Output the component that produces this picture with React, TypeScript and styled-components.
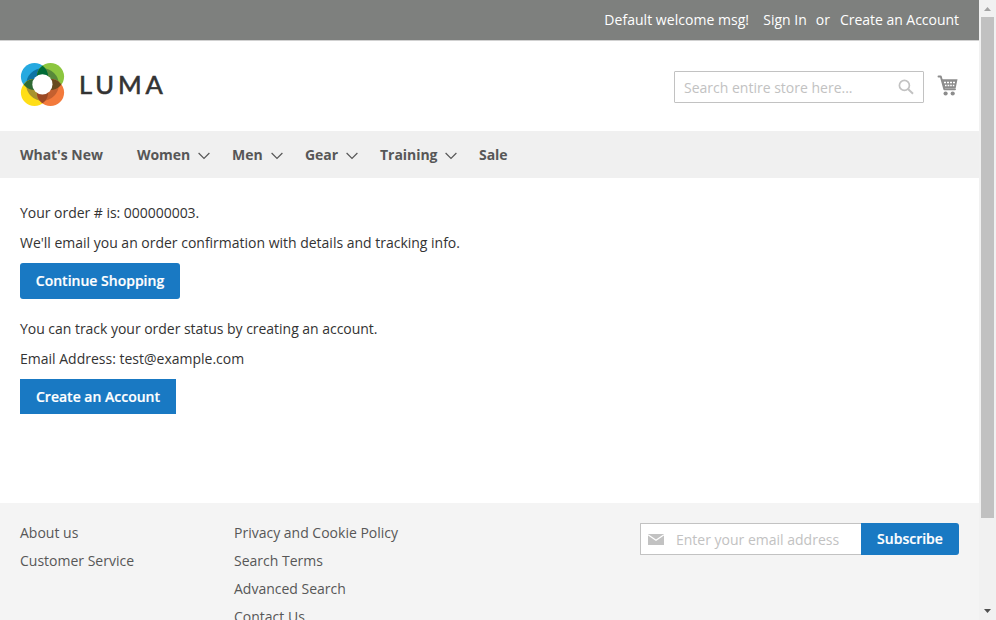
import React from "react";
import styled, { createGlobalStyle } from "styled-components";

const Global = createGlobalStyle`
  * { box-sizing: border-box; }
  html, body { margin: 0; padding: 0; height: 620px; overflow: hidden; background: #fff; }
  body { font-family: "Open Sans", Arial, sans-serif; font-size: 14px; line-height: 20px; color: #333; }
`;

const Window = styled.div`
  display: flex;
  width: 996px;
  height: 620px;
  overflow: hidden;
`;
const Page = styled.div`
  display: flex;
  flex-direction: column;
  width: 979px;
  height: 620px;
  overflow: hidden;
`;
const TopBar = styled.div`
  flex: none;
  display: flex;
  justify-content: flex-end;
  height: 41px;
  padding: 10px 20px 0 0;
  background: #7e807e;
  border-bottom: 1px solid #d1d1d1;
  color: #fff;
`;
const TopText = styled.span<{ $gap?: number; $spacing?: number }>`
  margin-left: ${(p) => p.$gap ?? 0}px;
  letter-spacing: ${(p) => p.$spacing ?? 0}px;
  white-space: nowrap;
`;
const Header = styled.header`
  flex: none;
  display: flex;
  align-items: flex-start;
  height: 90px;
  padding: 21px 20px 0;
`;
const Brand = styled.div`
  display: flex;
  align-items: flex-start;
  margin-right: auto;
`;
const BrandName = styled.span`
  margin: 0 0 0 13px;
  font-family: Lato, sans-serif;
  font-size: 25.5px;
  line-height: 44px;
  letter-spacing: 3.9px;
  color: #333;
  -webkit-text-stroke: 0.6px #333;
`;
const SearchBox = styled.div`
  display: flex;
  align-items: center;
  justify-content: space-between;
  width: 250px;
  height: 32px;
  margin: 9px 15px 0 0;
  padding: 2px 9px 0 9px;
  border: 1px solid #c2c2c2;
  border-radius: 1px;
  color: #c2c2c2;
`;
const SearchIcon = styled.svg`
  margin-top: -2px;
`;
const CartIcon = styled.svg`
  margin: 13px 1px 0 -2px;
`;
const Nav = styled.nav`
  flex: none;
  display: flex;
  align-items: center;
  height: 47px;
  padding: 0 20px;
  background: #f0f0f0;
  color: #575757;
  font-weight: 700;
`;
const NavItem = styled.span<{ $width: number }>`
  display: flex;
  align-items: center;
  justify-content: space-between;
  width: ${(p) => p.$width}px;
  margin-right: 22px;
  letter-spacing: -0.04px;
  white-space: nowrap;
`;
const Chevron = styled.svg`
  margin-top: 2px;
`;
const Main = styled.main`
  flex: none;
  display: flex;
  flex-direction: column;
  align-items: flex-start;
  height: 325px;
  padding: 25px 20px 0;
`;
const Line = styled.p<{ $spacing?: number }>`
  margin: 0 0 10px;
  letter-spacing: ${(p) => p.$spacing ?? 0}px;
  white-space: nowrap;
`;
const Button = styled.button<{ $w: number; $h: number; $radius: string; $after?: number }>`
  width: ${(p) => p.$w}px;
  height: ${(p) => p.$h}px;
  margin: 0 0 ${(p) => p.$after ?? 0}px;
  padding: 0;
  border: 0;
  border-radius: ${(p) => p.$radius};
  background: #1979c3;
  color: #fff;
  font: 600 14px/20px "Open Sans", sans-serif;
  -webkit-text-stroke: 0.2px #fff;
  white-space: nowrap;
`;
const Footer = styled.footer`
  flex: none;
  display: flex;
  height: 140px;
  padding: 20px 20px 0;
  background: #f4f4f4;
  color: #575757;
`;
const LinkColumn = styled.div`
  display: flex;
  flex-direction: column;
  gap: 8px;
  width: 214px;
`;
const FooterLink = styled.span`
  white-space: nowrap;
`;
const Newsletter = styled.form`
  display: flex;
  margin-left: auto;
`;
const EmailField = styled.div`
  display: flex;
  align-items: center;
  gap: 12px;
  width: 221px;
  height: 32px;
  padding: 0 0 0 7px;
  border: 1px solid #c2c2c2;
  border-right: 0;
  border-radius: 1px 0 0 1px;
  background: #fff;
  color: #c2c2c2;
`;
const FieldText = styled.span`
  padding-top: 2px;
  white-space: nowrap;
`;
const ScrollTrack = styled.div`
  display: flex;
  flex-direction: column;
  align-items: center;
  width: 17px;
  height: 620px;
  background: #f1f1f1;
`;
const ScrollThumb = styled.div`
  width: 13px;
  height: 501px;
  margin-bottom: auto;
  background: #c1c1c1;
`;

const R = 13.6;
const petals = [
  { id: "tl", cx: 14.5, cy: 14.5, color: "#26a9e0", ring: "#0d74a3" },
  { id: "tr", cx: 30.5, cy: 14.5, color: "#8cc63f", ring: "#58893a" },
  { id: "bl", cx: 14.5, cy: 30.5, color: "#ffde17", ring: "#a8932f" },
  { id: "br", cx: 30.5, cy: 30.5, color: "#f37a3c", ring: "#c4602f" },
];
const overlaps = [
  { a: "tl", cx: 30.5, cy: 14.5, color: "#006b36" },
  { a: "tl", cx: 14.5, cy: 30.5, color: "#2f6a35" },
  { a: "br", cx: 30.5, cy: 14.5, color: "#664a1e" },
  { a: "br", cx: 14.5, cy: 30.5, color: "#9b4924" },
];

const Logo = () => (
  <svg width="46" height="45" viewBox="0 0 46 45">
    <defs>
      {petals.map((p) => (
        <clipPath key={p.id} id={p.id}><circle cx={p.cx} cy={p.cy} r={R} /></clipPath>
      ))}
    </defs>
    {petals.map((p) => (
      <g key={p.id}>
        <circle cx={p.cx} cy={p.cy} r={R} fill={p.color} />
        <circle cx="22.5" cy="22.5" r="16.3" fill={p.ring} clipPath={`url(#${p.id})`} />
      </g>
    ))}
    {overlaps.map((o) => (
      <circle key={o.color} cx={o.cx} cy={o.cy} r={R} fill={o.color} clipPath={`url(#${o.a})`} />
    ))}
    <circle cx="22.4" cy="22.4" r="10.1" fill="#fff" />
  </svg>
);

const Down = () => (
  <Chevron width="12" height="8" viewBox="0 0 12 8" fill="none" stroke="#575757" strokeWidth="1.2">
    <path d="M.6 1 6 6.4 11.4 1" />
  </Chevron>
);

const Cart = () => (
  <CartIcon width="21" height="22" viewBox="0 0 21 22" fill="#8c8c8c">
    <path d="M1.500 1.500H3.800L7.300 14.300H18" fill="none" stroke="#8c8c8c" strokeWidth="1.900" strokeLinecap="round" strokeLinejoin="round" />
    <path d="M4.300 4.300H20.500L18.700 13H6.700z" />
    <path d="M7 6.700h2v1.600H7zM10 6.700h2v1.600h-2zM13 6.700h2v1.600h-2zM16 6.700h2v1.600h-2zM8 9.700h1.600v1.500H8zM10.600 9.700h1.700v1.500h-1.700zM13.200 9.700h1.600v1.500h-1.600zM15.800 9.700h1.500v1.500h-1.500z" fill="#fff" />
    <circle cx="8.600" cy="18.500" r="2.100" />
    <circle cx="15.700" cy="18.500" r="2.100" />
  </CartIcon>
);

const navItems = [
  { label: "What's New", width: 95 },
  { label: "Women", width: 73, menu: true },
  { label: "Men", width: 51, menu: true },
  { label: "Gear", width: 53, menu: true },
  { label: "Training", width: 77, menu: true },
  { label: "Sale", width: 30 },
];

export default function App() {
  return (
    <>
      <Global />
      <Window>
        <Page>
          <TopBar>
            <TopText $spacing={0.04}>Default welcome msg!</TopText>
            <TopText $gap={14.2}>Sign In</TopText>
            <TopText $gap={9}>or</TopText>
            <TopText $gap={10} $spacing={-0.03}>Create an Account</TopText>
          </TopBar>
          <Header>
            <Brand><Logo /><BrandName>LUMA</BrandName></Brand>
            <SearchBox>
              <span>Search entire store here...</span>
              <SearchIcon width="16" height="16" viewBox="0 0 16 16" fill="none" stroke="#c2c2c2">
                <circle cx="6.400" cy="6.400" r="5" strokeWidth="1.700" />
                <path d="m10 10 5 4.700" strokeWidth="2" />
              </SearchIcon>
            </SearchBox>
            <Cart />
          </Header>
          <Nav>
            {navItems.map((n) => (
              <NavItem key={n.label} $width={n.width}>{n.label}{n.menu && <Down />}</NavItem>
            ))}
          </Nav>
          <Main>
            <Line $spacing={-0.03}>Your order # is: 000000003.</Line>
            <Line $spacing={-0.01}>We'll email you an order confirmation with details and tracking info.</Line>
            <Button $w={160} $h={36} $radius="3px" $after={20}>Continue Shopping</Button>
            <Line $spacing={-0.03}>You can track your order status by creating an account.</Line>
            <Line>Email Address: test@example.com</Line>
            <Button $w={156} $h={35} $radius="0">Create an Account</Button>
          </Main>
          <Footer>
            <LinkColumn>
              <FooterLink>About us</FooterLink>
              <FooterLink>Customer Service</FooterLink>
            </LinkColumn>
            <LinkColumn>
              <FooterLink>Privacy and Cookie Policy</FooterLink>
              <FooterLink>Search Terms</FooterLink>
              <FooterLink>Advanced Search</FooterLink>
              <FooterLink>Contact Us</FooterLink>
            </LinkColumn>
            <Newsletter>
              <EmailField>
                <svg width="16" height="11" viewBox="0 0 16 11">
                  <path d="M0 0h16v11H0z" fill="#c2c2c2" />
                  <path d="m0 .8 8 5.400 8-5.400" fill="none" stroke="#fff" strokeWidth="1.300" />
                </svg>
                <FieldText>Enter your email address</FieldText>
              </EmailField>
              <Button type="button" $w={98} $h={32} $radius="0 3px 3px 0">Subscribe</Button>
            </Newsletter>
          </Footer>
        </Page>
        <ScrollTrack>
          <svg width="17" height="17" viewBox="0 0 17 17"><path d="M5 11h7L8.500 7z" fill="#a3a3a3" /></svg>
          <ScrollThumb />
          <svg width="17" height="17" viewBox="0 0 17 17"><path d="M5 6h7L8.500 10z" fill="#505050" /></svg>
        </ScrollTrack>
      </Window>
    </>
  );
}
